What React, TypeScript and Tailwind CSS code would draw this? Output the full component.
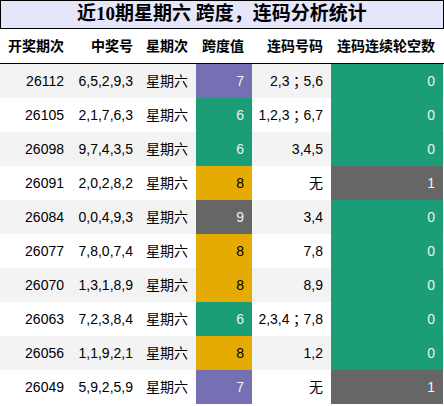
const rows = [
  { id: "26112", nums: "6,5,2,9,3", span: 7, lian: "2,3；5,6", gap: 0 },
  { id: "26105", nums: "2,1,7,6,3", span: 6, lian: "1,2,3；6,7", gap: 0 },
  { id: "26098", nums: "9,7,4,3,5", span: 6, lian: "3,4,5", gap: 0 },
  { id: "26091", nums: "2,0,2,8,2", span: 8, lian: "无", gap: 1 },
  { id: "26084", nums: "0,0,4,9,3", span: 9, lian: "3,4", gap: 0 },
  { id: "26077", nums: "7,8,0,7,4", span: 8, lian: "7,8", gap: 0 },
  { id: "26070", nums: "1,3,1,8,9", span: 8, lian: "8,9", gap: 0 },
  { id: "26063", nums: "7,2,3,8,4", span: 6, lian: "2,3,4；7,8", gap: 0 },
  { id: "26056", nums: "1,1,9,2,1", span: 8, lian: "1,2", gap: 0 },
  { id: "26049", nums: "5,9,2,5,9", span: 7, lian: "无", gap: 1 },
];

// span value -> cell colour
const spanColor: Record<number, string> = {
  6: "bg-[#1b9e77] text-[#f2f2f2]",
  7: "bg-[#7570b3] text-[#f2f2f2]",
  8: "bg-[#e6ab02] text-black",
  9: "bg-[#666666] text-[#f2f2f2]",
};

const gapColor = (g: number) =>
  g === 0 ? "bg-[#1b9e77] text-[#f2f2f2]" : "bg-[#666666] text-[#f2f2f2]";

const cols = "grid grid-cols-[72px_69px_55px_56px_79px_112px]";
const cell = "flex items-center justify-end pr-2 whitespace-nowrap";

// centred full-width semicolon like the source
const Lian = ({ text }: { text: string }) => {
  const parts = text.split("；");
  if (parts.length < 2) return <>{text}</>;
  return (
    <>
      {parts[0]}
      <span style={{ fontFamily: '"Noto Sans CJK TC", sans-serif' }}>；</span>
      {parts[1]}
    </>
  );
};

export default function App() {
  return (
    <div
      className="w-[444px] h-[406px] bg-white text-[14px] text-black overflow-hidden"
      style={{ fontFamily: '"Liberation Sans", "Noto Sans CJK SC", sans-serif' }}
    >
      <div
        className="h-[29px] w-[444px] border border-black bg-[#e6e6fa] flex items-center justify-center text-[19px] font-bold"
        style={{ fontFamily: '"Liberation Serif", "Noto Sans CJK SC", serif' }}
      >
        近10期星期六 跨度，连码分析统计
      </div>
      <div className={`${cols} h-[35px] border-b border-black font-bold`}>
        <div className={cell}>开奖期次</div>
        <div className={cell}>中奖号</div>
        <div className={cell}>星期次</div>
        <div className={cell}>跨度值</div>
        <div className={cell}>连码号码</div>
        <div className={cell}>连码连续轮空数</div>
      </div>
      {rows.map((r, i) => (
        <div
          key={r.id}
          className={`${cols} h-[34px] ${i % 2 === 0 ? "bg-[#f3f3f3]" : "bg-white"}`}
        >
          <div className={cell}>{r.id}</div>
          <div className={cell}>{r.nums}</div>
          <div className={cell}>星期六</div>
          <div className={`${cell} ${spanColor[r.span]}`}>{r.span}</div>
          <div className={cell}>
            <Lian text={r.lian} />
          </div>
          <div className={`${cell} ${gapColor(r.gap)}`}>{r.gap}</div>
        </div>
      ))}
    </div>
  );
}
